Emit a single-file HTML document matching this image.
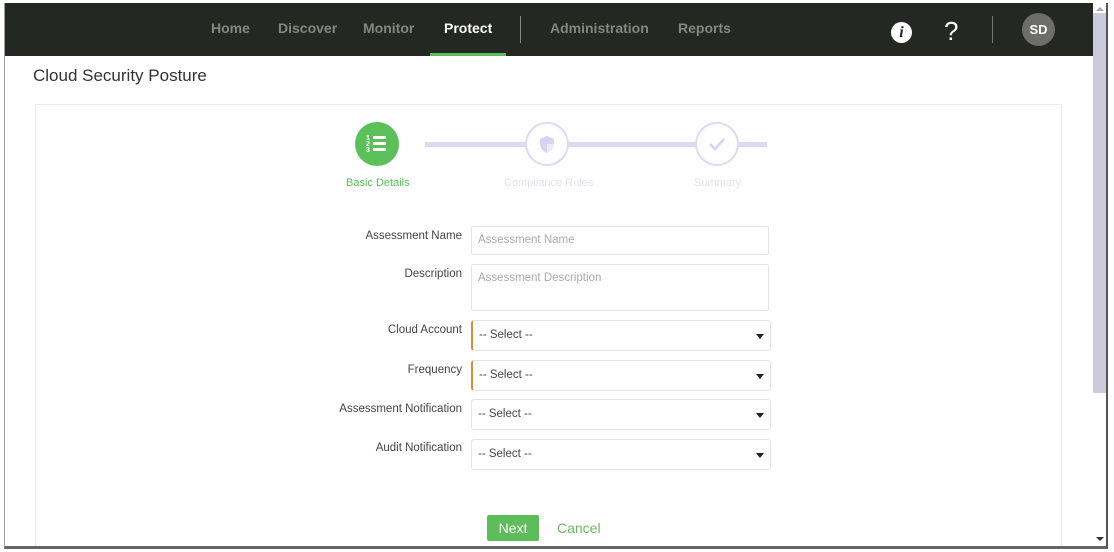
<!DOCTYPE html>
<html><head><meta charset="utf-8"><style>
*{box-sizing:border-box;margin:0;padding:0}
html,body{width:1114px;height:552px;overflow:hidden}
body{background:#fff;font-family:"Liberation Sans",sans-serif;position:relative}
.frame{position:absolute;left:4px;top:3px;width:1104px;height:546px;border-left:1px solid #9a9a9a;border-right:2px solid #555;border-bottom:3px solid #666;z-index:5;pointer-events:none}
.nav{position:absolute;left:4px;top:3px;width:1089px;height:53px;background:#252723}
.nav a{position:absolute;top:17px;font-size:14px;font-weight:bold;color:#85877f}
.sb{position:absolute;left:1093px;top:3px;width:13px;height:543px;background:#fff}
.thumb{position:absolute;left:1093px;top:13px;width:13px;height:380px;background:#cbcbdc}
.title{position:absolute;left:33px;top:66px;font-size:17px;color:#333}
.card{position:absolute;left:35px;top:104px;width:1027px;height:442px;border:1px solid #ecebf3;border-bottom:0}
.lbl{position:absolute;font-size:11.5px;color:#444;text-align:right;width:200px;left:262px}
.inp{position:absolute;left:471px;width:298px;border:1px solid #e3e2ef;border-radius:2px;font-size:11.5px;color:#aaa;padding:7px 6px}
.sel{position:absolute;left:471px;width:300px;height:31px;border:1px solid #e3e2ef;border-radius:3px;font-size:11.5px;color:#444;padding:8px 6px}
.sel.req{border-left:2px solid #e08a3a}
.sel:after{content:"";position:absolute;right:6px;top:13px;border:4px solid transparent;border-top:5px solid #222}
.step{position:absolute;width:44px;height:44px;border-radius:50%;top:122px}
.sl{position:absolute;top:177px;font-size:11px}
</style></head><body>
<div class="frame"></div>
<div class="nav">
<a style="left:207px">Home</a><a style="left:274px">Discover</a><a style="left:359px">Monitor</a>
<a style="left:440px;color:#fff">Protect</a>
<div style="position:absolute;left:426px;top:50px;width:76px;height:3px;background:#5cc05a"></div>
<div style="position:absolute;left:516px;top:13px;width:1px;height:27px;background:#888"></div>
<a style="left:546px">Administration</a><a style="left:674px">Reports</a>
<div style="position:absolute;left:887px;top:19px;width:21px;height:21px;border-radius:50%;background:#fff;color:#252723;font:italic bold 16px 'Liberation Serif',serif;text-align:center;line-height:21px">i</div>
<div style="position:absolute;left:940px;top:13px;color:#fff;font-size:26px">?</div>
<div style="position:absolute;left:988px;top:13px;width:1px;height:27px;background:#777"></div>
<div style="position:absolute;left:1018px;top:10px;width:33px;height:33px;border-radius:50%;background:#6d6e6a;color:#fff;font-size:13px;font-weight:bold;text-align:center;line-height:33px">SD</div>
</div>
<div class="sb"></div><div class="thumb"></div>
<div style="position:absolute;left:1096px;top:7px;border:4px solid transparent;border-bottom:4px solid #aaa;border-top:0"></div>
<div style="position:absolute;left:1096px;top:537px;border:4px solid transparent;border-top:4px solid #333;border-bottom:0"></div>
<div class="title">Cloud Security Posture</div>
<div class="card"></div>
<div style="position:absolute;left:425px;top:142px;width:342px;height:5px;background:#dcdbf5"></div>
<div class="step" style="left:355px;background:#5cc05a">
<svg width="44" height="44" viewBox="0 0 44 44"><g fill="#fff"><rect x="18" y="14" width="13" height="3"/><rect x="18" y="20" width="13" height="3"/><rect x="18" y="26" width="13" height="3"/><text x="11" y="18" font-size="7" font-weight="bold" font-family="Liberation Sans">1</text><text x="11" y="24" font-size="7" font-weight="bold" font-family="Liberation Sans">2</text><text x="11" y="30" font-size="7" font-weight="bold" font-family="Liberation Sans">3</text></g></svg></div>
<div class="step" style="left:525px;background:#fff;border:2px solid #dcdbf5">
<svg width="40" height="40" viewBox="0 0 40 40"><path d="M20 12l7 3v5c0 4-3 7-7 9c-4-2-7-5-7-9v-5z" fill="#d6d4f2"/><path d="M20 12v8h7v0c0 4-3 7-7 9z" fill="#fff" opacity=".5"/></svg></div>
<div class="step" style="left:695px;background:#fff;border:2px solid #dcdbf5">
<svg width="40" height="40" viewBox="0 0 40 40"><path d="M13 20l5 5l9-10" fill="none" stroke="#d6d4f2" stroke-width="2.5"/></svg></div>
<div class="sl" style="left:346px;color:#5cc05a">Basic Details</div>
<div class="sl" style="left:504px;color:#e2e1f2">Compliance Rules</div>
<div class="sl" style="left:694px;color:#e2e1f2">Summary</div>
<div class="lbl" style="top:230px">Assessment Name</div>
<div class="inp" style="top:226px;height:29px">Assessment Name</div>
<div class="lbl" style="top:268px">Description</div>
<div class="inp" style="top:264px;height:47px">Assessment Description</div>
<div class="lbl" style="top:324px">Cloud Account</div>
<div class="sel req" style="top:320px">-- Select --</div>
<div class="lbl" style="top:364px">Frequency</div>
<div class="sel req" style="top:360px">-- Select --</div>
<div class="lbl" style="top:403px">Assessment Notification</div>
<div class="sel" style="top:399px">-- Select --</div>
<div class="lbl" style="top:442px">Audit Notification</div>
<div class="sel" style="top:439px">-- Select --</div>
<div style="position:absolute;left:487px;top:515px;width:52px;height:26px;background:#5cbd5a;border-radius:2px;color:#fff;font-size:14px;text-align:center;line-height:26px">Next</div>
<div style="position:absolute;left:557px;top:520px;color:#6cba5e;font-size:14px">Cancel</div>
</body></html>
